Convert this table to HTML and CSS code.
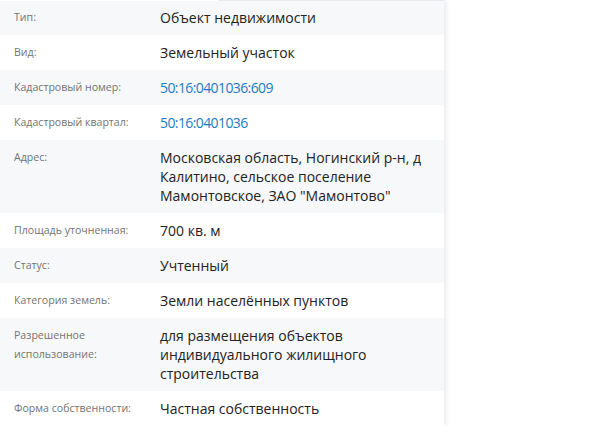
FILE: index.html
```html
<!DOCTYPE html>
<html lang="ru">
<head>
<meta charset="utf-8">
<link rel="stylesheet" href="styles.css">
</head>
<body>
<div class="panel">
  <div class="topline"></div>
  <div class="row first"><div class="label">Тип:</div><div class="value">Объект недвижимости</div></div>
  <div class="row"><div class="label">Вид:</div><div class="value">Земельный участок</div></div>
  <div class="row"><div class="label">Кадастровый номер:</div><div class="value"><a class="link" href="#">50:16:0401036:609</a></div></div>
  <div class="row"><div class="label">Кадастровый квартал:</div><div class="value"><a class="link" href="#">50:16:0401036</a></div></div>
  <div class="row"><div class="label">Адрес:</div><div class="value">Московская область, Ногинский р-н, д Калитино, сельское поселение Мамонтовское, ЗАО "Мамонтово"</div></div>
  <div class="row"><div class="label">Площадь уточненная:</div><div class="value">700 кв. м</div></div>
  <div class="row"><div class="label">Статус:</div><div class="value">Учтенный</div></div>
  <div class="row"><div class="label">Категория земель:</div><div class="value">Земли населённых пунктов</div></div>
  <div class="row"><div class="label">Разрешенное использование:</div><div class="value">для размещения объектов индивидуального жилищного строительства</div></div>
  <div class="row"><div class="label">Форма собственности:</div><div class="value">Частная собственность</div></div>
</div>
</body>
</html>
```
FILE: styles.css
```css
html, body {
  margin: 0;
  padding: 0;
  background: #ffffff;
}
body {
  font-family: "Open Sans", "Noto Sans", sans-serif;
  color: #222222;
  overflow: hidden;
}
.panel {
  width: 444px;
  background: #ffffff;
  box-shadow: 2px 0 5px rgba(0, 0, 0, 0.09);
}
.topline {
  height: 1px;
  margin-left: 218px;
  background: #e8eaee;
}
.row {
  display: grid;
  grid-template-columns: 146px 1fr;
  padding: 8px 12px 8px 14px;
}
.row.first {
  padding-top: 7px;
}
.row:nth-child(even) {
  background: #f7f8fa;
}
.label {
  font-size: 10.6px;
  line-height: 19px;
  color: #737373;
  padding-right: 10px;
}
.value {
  font-size: 14px;
  line-height: 19px;
  color: #222222;
}
.link {
  color: #1a7cc4;
  text-decoration: none;
  letter-spacing: -0.6px;
}
```
